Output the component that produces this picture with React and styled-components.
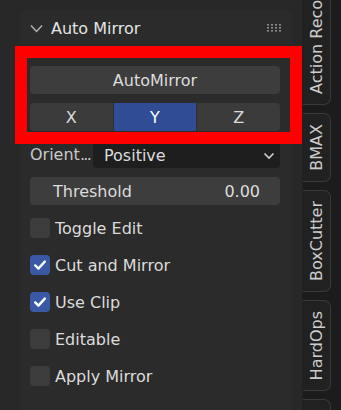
import React from 'react';
import styled, { createGlobalStyle } from 'styled-components';

const GlobalStyle = createGlobalStyle`
  body {
    margin: 0;
    background: #282828;
    font-family: "DejaVu Sans", "Liberation Sans", sans-serif;
    font-size: 16px;
    color: #dcdcdc;
  }
`;

const Screen = styled.div`
  display: flex;
  width: 341px;
  height: 410px;
  overflow: hidden;
`;

const Region = styled.div`
  position: relative;
  flex: 1;
  padding-top: 10px;
  background: #282828;
  overflow: hidden;
`;

const Panel = styled.div`
  margin-left: 20px;
  width: 272px;
  min-height: 420px;
  background: #2b2b2b;
  border-radius: 5px 5px 0 0;
`;

const Header = styled.div`
  display: flex;
  align-items: center;
  height: 36px;
  padding: 0 11px 0 10px;
`;

const Title = styled.span`
  flex: 1;
  margin-left: 8px;
  color: #e4e4e4;
`;

const Body = styled.div`
  display: flex;
  flex-direction: column;
  gap: 9px;
  padding: 20px 12px 0 10px;
`;

const Button = styled.div`
  height: 28px;
  display: flex;
  align-items: center;
  justify-content: center;
  background: #3d3d3d;
  border-radius: 4px;
`;

const Segments = styled.div`
  display: grid;
  grid-template-columns: repeat(3, 1fr);
  height: 28px;
  border-radius: 4px;
  overflow: hidden;
  gap: 1px;
  background: #2e2e2e;
`;

const Segment = styled.div`
  display: flex;
  align-items: center;
  justify-content: center;
  background: ${p => (p.active ? '#2f4c94' : '#3b3b3b')};
  color: ${p => (p.active ? '#ffffff' : '#dcdcdc')};
`;

const PropRow = styled.div`
  display: flex;
  align-items: center;
  height: 28px;
`;

const PropLabel = styled.span`
  width: 63px;
  color: #c9c9c9;
  white-space: nowrap;
`;

const Dots = styled.span`
  letter-spacing: -1.6px;
`;

const Dropdown = styled.div`
  flex: 1;
  display: flex;
  align-items: center;
  justify-content: space-between;
  height: 25px;
  margin-top: 3px;
  padding: 0 5px 0 11px;
  background: #1e1e1e;
  border-radius: 4px;
`;

const NumberField = styled.div`
  height: 28px;
  display: flex;
  align-items: center;
  justify-content: space-between;
  padding: 0 20px 0 23px;
  background: #3d3d3d;
  border-radius: 4px;
`;

const CheckRow = styled.label`
  display: flex;
  align-items: center;
  height: 28px;
  gap: 5px;
`;

const Box = styled.span`
  width: 20px;
  height: 20px;
  border-radius: 4px;
  display: flex;
  align-items: center;
  justify-content: center;
  background: ${p => (p.checked ? '#3a58a3' : '#3c3c3c')};
`;

const RedFrame = styled.div`
  position: absolute;
  left: 15px;
  top: 46px;
  width: 287px;
  height: 98px;
  box-sizing: border-box;
  border: 12px solid #ff0000;
  pointer-events: none;
`;

const TabStrip = styled.div`
  width: 38px;
  display: flex;
  flex-direction: column;
  gap: 8px;
  margin-top: -44px;
  background: #1c1c1c;
  border-left: 1px solid #202020;
`;

const Tab = styled.div`
  width: 27px;
  display: flex;
  justify-content: center;
  padding: 10px 0;
  background: #212121;
  border: 1px solid #3a3a3a;
  border-left: none;
  border-radius: 0 7px 7px 0;
`;

const TabLabel = styled.span`
  writing-mode: vertical-rl;
  transform: rotate(180deg);
  white-space: nowrap;
  color: #cdcdcd;
  line-height: 27px;
`;

function Chevron() {
  return (
    <svg width="13" height="9" viewBox="0 0 13 9">
      <polyline points="1,1.5 6.5,7.5 12,1.5" fill="none" stroke="#b5b5b5" strokeWidth="1.4" />
    </svg>
  );
}

function Grip() {
  const dots = [];
  for (let r = 0; r < 3; r++) {
    for (let c = 0; c < 4; c++) {
      dots.push(<rect key={`${r}-${c}`} x={c * 4} y={r * 3} width="2" height="1.6" fill="#8a8a8a" />);
    }
  }
  return (
    <svg width="14" height="8" viewBox="0 0 14 8">
      {dots}
    </svg>
  );
}

function Check({ checked, label }) {
  return (
    <CheckRow>
      <Box checked={checked}>
        {checked && (
          <svg width="14" height="14" viewBox="0 0 14 14">
            <polyline points="2.2,7.4 5.4,10.6 11.8,3.6" fill="none" stroke="#fff" strokeWidth="2.4" strokeLinecap="round" strokeLinejoin="round" />
          </svg>
        )}
      </Box>
      {label}
    </CheckRow>
  );
}

const tabs = ['Action Recorder', 'BMAX', 'BoxCutter', 'HardOps', 'Tools'];

export default function App() {
  return (
    <Screen>
      <GlobalStyle />
      <Region>
        <Panel>
          <Header>
            <Chevron />
            <Title>Auto Mirror</Title>
            <Grip />
          </Header>
          <Body>
            <Button>AutoMirror</Button>
            <Segments>
              <Segment>X</Segment>
              <Segment active>Y</Segment>
              <Segment>Z</Segment>
            </Segments>
            <PropRow>
              <PropLabel>
                Orient<Dots>...</Dots>
              </PropLabel>
              <Dropdown>
                Positive
                <svg width="12" height="8" viewBox="0 0 12 8">
                  <polyline points="1.5,1.5 6,6 10.5,1.5" fill="none" stroke="#d0d0d0" strokeWidth="1.6" />
                </svg>
              </Dropdown>
            </PropRow>
            <NumberField>
              <span>Threshold</span>
              <span>0.00</span>
            </NumberField>
            <Check label="Toggle Edit" />
            <Check checked label="Cut and Mirror" />
            <Check checked label="Use Clip" />
            <Check label="Editable" />
            <Check label="Apply Mirror" />
          </Body>
        </Panel>
        <RedFrame />
      </Region>
      <TabStrip>
        {tabs.map(t => (
          <Tab key={t}>
            <TabLabel>{t}</TabLabel>
          </Tab>
        ))}
      </TabStrip>
    </Screen>
  );
}
